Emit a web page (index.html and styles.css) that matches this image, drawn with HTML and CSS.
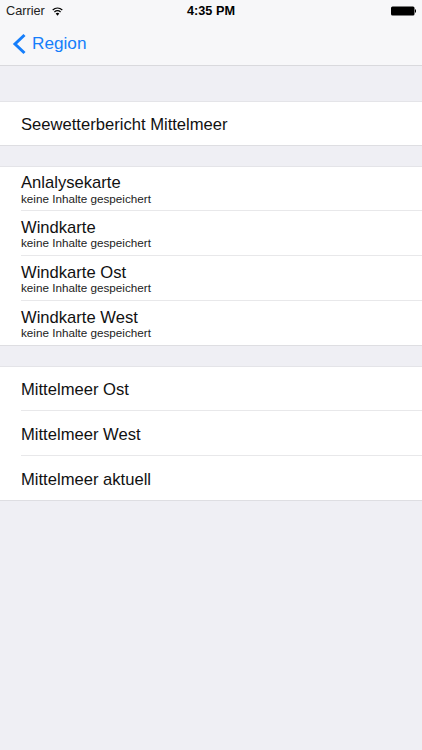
FILE: index.html
```
<!DOCTYPE html>
<html lang="de">
<head>
<meta charset="utf-8">
<title>Region</title>
<link rel="stylesheet" href="styles.css">
</head>
<body>
<header class="bar">
  <div class="status">
    <div class="status-left">
      <span class="carrier">Carrier</span>
      <svg class="wifi" width="11" height="9" viewBox="0 0 11 9"><path d="M5.500 8.800 3.700 6.500a2.900 2.900 0 0 1 3.600 0z" fill="#000"/><path d="M2.400 4.900a4.900 4.900 0 0 1 6.200 0M.7 2.900a7.500 7.500 0 0 1 9.600 0" fill="none" stroke="#000" stroke-width="1.300"/></svg>
    </div>
    <span class="time">4:35 PM</span>
    <svg class="battery" width="25" height="10" viewBox="0 0 25 10"><rect x="0" y="0.500" width="23.500" height="9" rx="1.500" fill="#000"/><rect x="24" y="3.500" width="1" height="3" fill="#000"/></svg>
  </div>
  <div class="nav">
    <svg class="chev" width="15" height="22" viewBox="0 0 15 22"><path d="M12.500 2 3 11l9.500 9" fill="none" stroke="#157efb" stroke-width="3"/></svg>
    <span class="back">Region</span>
  </div>
</header>
<main>
  <section class="group first">
    <div class="row single"><span class="title">Seewetterbericht Mittelmeer</span></div>
  </section>
  <section class="group">
    <div class="row double"><span class="title">Anlalysekarte</span><span class="sub">keine Inhalte gespeichert</span></div>
    <div class="row double"><span class="title">Windkarte</span><span class="sub">keine Inhalte gespeichert</span></div>
    <div class="row double"><span class="title">Windkarte Ost</span><span class="sub">keine Inhalte gespeichert</span></div>
    <div class="row double"><span class="title">Windkarte West</span><span class="sub">keine Inhalte gespeichert</span></div>
  </section>
  <section class="group">
    <div class="row single"><span class="title">Mittelmeer Ost</span></div>
    <div class="row single"><span class="title">Mittelmeer West</span></div>
    <div class="row single"><span class="title">Mittelmeer aktuell</span></div>
  </section>
</main>
</body>
</html>
```
FILE: styles.css
```
* { box-sizing: border-box; }
html, body { margin: 0; height: 100%; }
body {
  background: #efeff4;
  font-family: "Liberation Sans", Arial, sans-serif;
  color: #000;
  overflow: hidden;
}
.bar {
  height: 66px;
  background: #f7f7f9;
  border-bottom: 1px solid #d9d9dd;
}
.status {
  height: 22px;
  padding: 0 6px;
  display: grid;
  grid-template-columns: 1fr auto 1fr;
  align-items: center;
  font-size: 12.7px;
}
.status-left { display: flex; align-items: center; gap: 7px; }
.carrier { color: #222; }
.wifi { margin-top: 1px; }
.time { font-weight: 700; }
.battery { justify-self: end; }
.nav {
  height: 43px;
  display: flex;
  align-items: center;
  padding-left: 12px;
  gap: 5px;
  color: #157efb;
}
.back { font-size: 17.2px; }
.group { margin-top: 20px; background: #fff; border-top: 1px solid #e4e4e8; border-bottom: 1px solid #dedee2; }
.group.first { margin-top: 35px; }
.row {
  margin-left: 21px;
  height: 45px;
  display: flex;
  flex-direction: column;
  border-bottom: 1px solid #e8e8ea;
}
.row:first-child { height: 44px; }
.row:last-child { height: 44px; border-bottom: 0; }
.row:only-child { height: 43px; }
.single { padding-top: 14px; }
.single:first-child { padding-top: 13px; }
.title { font-size: 16.6px; line-height: 20px; color: #111; }
.sub { font-size: 11.7px; line-height: 13px; color: #222; }
.double { padding-top: 8px; }
.double .title { line-height: 17px; }
.double:first-child { padding-top: 7px; }
.double:first-child .title { line-height: 18px; }
```
